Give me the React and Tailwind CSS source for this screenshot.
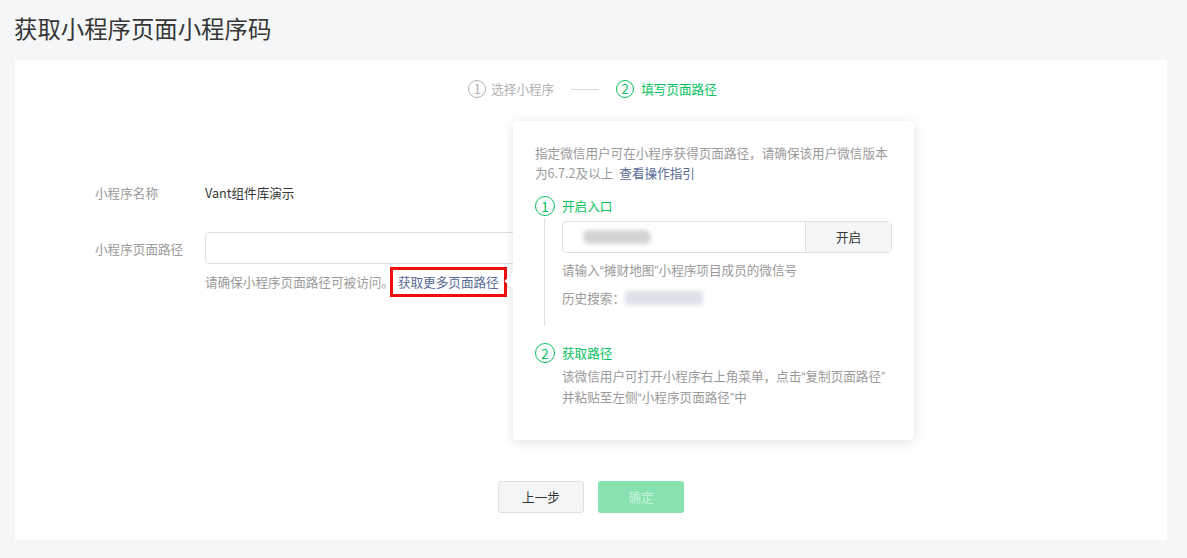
const Q = ({ children }) => <span style={{ fontFamily: '"Liberation Sans", sans-serif' }}>{children}</span>;

export default function App() {
    const font = { fontFamily: '"Noto Sans CJK SC", "Noto Sans", sans-serif' };
    return (
        <div className="min-h-[558px] bg-[#f5f6f7] px-[15px] pt-[13px] pb-[18px]" style={font}>
            <h1 className="-ml-[1px] text-[23.4px] leading-[30px] text-[#353535]">获取小程序页面小程序码</h1>
            <div className="relative mt-[17px] h-[480px] w-[1152px] bg-white pt-[19px] text-[12.6px]">
                {/* steps */}
                <div className="flex items-center justify-center pl-[3px] leading-[20px]">
                    <div className="flex items-center text-[#b2b2b2]">
                        <span className="flex h-[18px] w-[18px] items-center justify-center rounded-full border border-[#b2b2b2] text-[13px]">1</span>
                        <span className="ml-[5px]">选择小程序</span>
                    </div>
                    <div className="mx-[17px] h-px w-[28px] bg-[#d9d9d9]" />
                    <div className="flex items-center text-[#07c160]">
                        <span className="flex h-[18px] w-[18px] items-center justify-center rounded-full border border-[#07c160] text-[13px]">2</span>
                        <span className="ml-[7px]">填写页面路径</span>
                    </div>
                </div>

                {/* form */}
                <div className="mt-[84px] pl-[80px]">
                    <div className="flex items-center leading-[20px]">
                        <span className="w-[110px] text-[#9a9a9a]">小程序名称</span>
                        <span className="text-[#353535]">Vant组件库演示</span>
                    </div>
                    <div className="mt-[29px] flex">
                        <span className="w-[110px] pt-[7px] leading-[20px] text-[#9a9a9a]">小程序页面路径</span>
                        <div>
                            <div className="h-[32px] w-[390px] rounded-[4px] border border-[#e0e0e0]" />
                            <div className="mt-[3px] flex items-center leading-[20px]">
                                <span className="text-[#9a9a9a]">请确保小程序页面路径可被访问。</span>
                                <span className="-ml-[4px] border-[3px] border-[#f00f0f] px-[5px] py-[2px] text-[#576b95]">获取更多页面路径</span>
                            </div>
                        </div>
                    </div>
                </div>

                {/* buttons */}
                <div className="absolute bottom-[27px] left-0 right-0 flex justify-center gap-[14px]">
                    <button className="h-[32px] w-[86px] rounded-[3px] border border-[#e0e0e0] bg-[#f4f5f7] text-[#353535]">上一步</button>
                    <button className="h-[32px] w-[86px] rounded-[3px] bg-[#87e2b0] text-[#c6f1d9]">确定</button>
                </div>

                {/* popover */}
                <div className="absolute left-[498px] top-[61px] h-[319px] w-[401px] rounded-[4px] bg-white px-[22px] pt-[22px] shadow-[0_2px_12px_rgba(0,0,0,0.12)]">
                    <div className="absolute -left-[6px] top-[154px] h-[12px] w-[12px] rotate-45 bg-white shadow-[-2px_2px_3px_rgba(0,0,0,0.06)]" />
                    <p className="whitespace-nowrap leading-[20px] text-[#9a9a9a]">
                        指定微信用户可在小程序获得页面路径，请确保该用户微信版本<br />
                        为6.7.2及以上<span className="ml-[6px] text-[#576b95]">查看操作指引</span>
                    </p>
                    <div className="mt-[13px] flex items-center leading-[20px] text-[#07c160]">
                        <span className="flex h-[20px] w-[20px] items-center justify-center rounded-full border border-[#07c160] text-[14px]">1</span>
                        <span className="ml-[7px]">开启入口</span>
                    </div>
                    <div className="ml-[9px] mt-[2px] border-l border-[#e0e0e0] pb-[18px] pl-[17px] pt-[3px]">
                        <div className="w-[330px]">
                            <div className="flex h-[32px] rounded-[4px] border border-[#e0e0e0]">
                                <div className="flex flex-1 items-center pl-[20px]">
                                    <div className="h-[14px] w-[68px] rounded-[6px] bg-[#d4d4d4] blur-[2px]" />
                                </div>
                                <div className="flex w-[86px] items-center justify-center border-l border-[#e0e0e0] bg-[#f5f6f7] text-[#353535]">开启</div>
                            </div>
                            <p className="mt-[7px] whitespace-nowrap leading-[20px] text-[#9a9a9a]">请输入<Q>“</Q>摊财地图<Q>”</Q>小程序项目成员的微信号</p>
                            <div className="mt-[7px] flex items-center leading-[20px] text-[#9a9a9a]">
                                <span>历史搜索：</span>
                                <div className="h-[14px] w-[78px] bg-[#dde0e8] blur-[2px]" />
                            </div>
                        </div>
                    </div>
                    <div className="mt-[17px] flex items-center leading-[20px] text-[#07c160]">
                        <span className="flex h-[20px] w-[20px] items-center justify-center rounded-full border border-[#07c160] text-[14px]">2</span>
                        <span className="ml-[7px]">获取路径</span>
                    </div>
                    <p className="ml-[27px] mt-[3px] whitespace-nowrap leading-[20px] text-[#9a9a9a]">
                        该微信用户可打开小程序右上角菜单，点击<Q>“</Q>复制页面路径<Q>”</Q><br />
                        并粘贴至左侧<Q>“</Q>小程序页面路径<Q>”</Q>中
                    </p>
                </div>
            </div>
        </div>
    );
}
